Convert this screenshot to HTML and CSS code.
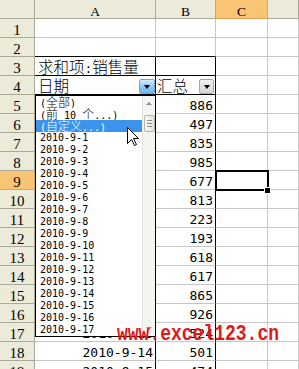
FILE: index.html
```html
<!DOCTYPE html>
<html lang="zh-CN">
<head>
<meta charset="utf-8">
<title>数据透视表 - 日期筛选</title>
<link rel="stylesheet" href="styles.css">
</head>
<body>
<div class="sheet">
  <div class="grid">
    <div class="c hd corner"></div>
    <div class="c hd ch">A</div>
    <div class="c hd ch">B</div>
    <div class="c hd ch hd-on">C</div>
    <div class="c hd ch"></div>

    <div class="c hd rh">1</div><div class="c"></div><div class="c"></div><div class="c"></div><div class="c"></div>
    <div class="c hd rh">2</div><div class="c bb"></div><div class="c bb"></div><div class="c"></div><div class="c"></div>
    <div class="c hd rh">3</div><div class="c cjk bb br">求和项<span class="colon">:</span>销售量</div><div class="c bb br"></div><div class="c"></div><div class="c"></div>
    <div class="c hd rh">4</div>
    <div class="c cjk bb br field"><span>日期</span><span class="dbtn dbtn-on"><i class="tri"></i></span></div>
    <div class="c cjk bb br field fieldb"><span>汇总</span><span class="dbtn"><i class="tri"></i></span></div>
    <div class="c"></div><div class="c"></div>

    <div class="c hd rh">5</div><div class="c num br">2010-9-1</div><div class="c num br">886</div><div class="c"></div><div class="c"></div>
    <div class="c hd rh">6</div><div class="c num br">2010-9-2</div><div class="c num br">497</div><div class="c"></div><div class="c"></div>
    <div class="c hd rh">7</div><div class="c num br">2010-9-3</div><div class="c num br">835</div><div class="c"></div><div class="c"></div>
    <div class="c hd rh">8</div><div class="c num br">2010-9-4</div><div class="c num br">985</div><div class="c"></div><div class="c"></div>
    <div class="c hd rh hd-on">9</div><div class="c num br">2010-9-5</div><div class="c num br">677</div><div class="c active"></div><div class="c"></div>
    <div class="c hd rh">10</div><div class="c num br">2010-9-6</div><div class="c num br">813</div><div class="c"></div><div class="c"></div>
    <div class="c hd rh">11</div><div class="c num br">2010-9-7</div><div class="c num br">223</div><div class="c"></div><div class="c"></div>
    <div class="c hd rh">12</div><div class="c num br">2010-9-8</div><div class="c num br">193</div><div class="c"></div><div class="c"></div>
    <div class="c hd rh">13</div><div class="c num br">2010-9-9</div><div class="c num br">618</div><div class="c"></div><div class="c"></div>
    <div class="c hd rh">14</div><div class="c num br">2010-9-10</div><div class="c num br">617</div><div class="c"></div><div class="c"></div>
    <div class="c hd rh">15</div><div class="c num br">2010-9-11</div><div class="c num br">865</div><div class="c"></div><div class="c"></div>
    <div class="c hd rh">16</div><div class="c num br">2010-9-12</div><div class="c num br">926</div><div class="c"></div><div class="c"></div>
    <div class="c hd rh">17</div><div class="c num br">2010-9-13</div><div class="c num br">524</div><div class="c"></div><div class="c"></div>
    <div class="c hd rh">18</div><div class="c num br">2010-9-14</div><div class="c num br">501</div><div class="c"></div><div class="c"></div>
    <div class="c hd rh">19</div><div class="c num br">2010-9-15</div><div class="c num br">474</div><div class="c"></div><div class="c"></div>
  </div>

  <div class="dd">
    <div class="items">
      <div class="item">(<span class="zh">全部</span>)</div>
      <div class="item">(<span class="zh">前</span> 10 <span class="zh">个</span>...)</div>
      <div class="item sel">(<span class="zh">自定义</span>...)</div>
      <div class="item">2010-9-1</div>
      <div class="item">2010-9-2</div>
      <div class="item">2010-9-3</div>
      <div class="item">2010-9-4</div>
      <div class="item">2010-9-5</div>
      <div class="item">2010-9-6</div>
      <div class="item">2010-9-7</div>
      <div class="item">2010-9-8</div>
      <div class="item">2010-9-9</div>
      <div class="item">2010-9-10</div>
      <div class="item">2010-9-11</div>
      <div class="item">2010-9-12</div>
      <div class="item">2010-9-13</div>
      <div class="item">2010-9-14</div>
      <div class="item">2010-9-15</div>
      <div class="item">2010-9-16</div>
      <div class="item">2010-9-17</div>
    </div>
    <div class="sb">
      <div class="sb-btn"><i class="up"></i></div>
      <div class="thumb"><i></i><i></i><i></i></div>
      <div class="sb-fill"></div>
      <div class="sb-btn"><i class="down"></i></div>
    </div>
  </div>

  <svg class="cursor" width="13" height="20" viewBox="0 0 13 20">
    <path d="M0.5 0.5 V16.5 L4.5 12.5 L7.5 18.5 L9.5 17.5 L6.5 11.5 H11.5 Z" fill="#fff" stroke="#000" stroke-width="1" stroke-linejoin="miter"/>
  </svg>

  <div class="watermark">www.excel123.cn</div>
</div>
</body>
</html>
```
FILE: styles.css
```css
body {
  margin: 0;
  background: #fff;
  overflow: hidden;
}

.sheet {
  position: relative;
  width: 299px;
  height: 369px;
  overflow: hidden;
}

.grid {
  display: grid;
  grid-template-columns: 35px 121px 60px 52px 1fr;
  grid-auto-rows: 19px;
}

.c {
  box-sizing: border-box;
  border-right: 1px solid #c6c6c6;
  border-bottom: 1px solid #c6c6c6;
  overflow: hidden;
  white-space: nowrap;
  color: #000;
  font-family: "DejaVu Sans Mono", monospace;
  font-size: 13px;
  line-height: 14px;
  padding-top: 4px;
}

.hd {
  background: #ecead9;
  border-right-color: #aca899;
  border-bottom-color: #aca899;
  font-family: "Liberation Serif", serif;
  text-align: center;
}

.ch {
  font-size: 13.5px;
  line-height: 16px;
  padding-top: 4px;
}

.rh {
  font-size: 15px;
  line-height: 18px;
  padding-top: 2px;
}

.hd-on {
  background: #f9c574;
  border-right-color: #e0a54c;
  border-bottom-color: #e0a54c;
}

.bb { border-bottom-color: #000; }
.br { border-right-color: #000; }

.num {
  text-align: right;
  padding-right: 2px;
}

.cjk {
  font-family: "Noto Sans CJK SC", sans-serif;
  font-weight: 300;
  font-size: 15.5px;
  line-height: 18px;
  padding-top: 0;
  padding-left: 3px;
}

.colon {
  font-family: "DejaVu Sans Mono", monospace;
  font-size: 13px;
}

.field {
  display: flex;
  justify-content: space-between;
  align-items: flex-start;
}

.fieldb {
  padding-left: 1px;
}

.dbtn {
  box-sizing: border-box;
  width: 15px;
  height: 15px;
  margin-top: 3px;
  margin-right: 1px;
  border: 1px solid #a7a69e;
  border-radius: 2px;
  background: linear-gradient(#f3f3f0, #d6d5cf);
  display: flex;
  justify-content: center;
  padding-top: 5px;
}

.dbtn-on {
  width: 16px;
  margin-right: 0;
  border-color: #6fa6d8;
  background: linear-gradient(#d6ebfd, #8ec6f3 55%, #6fb3ec);
}

.tri {
  display: block;
  width: 0;
  height: 0;
  border-left: 3.5px solid transparent;
  border-right: 3.5px solid transparent;
  border-top: 4px solid #000;
}

.active {
  position: relative;
  overflow: visible;
  z-index: 2;
}

.active::before {
  content: "";
  position: absolute;
  left: -1px;
  top: -1px;
  width: 54px;
  height: 21px;
  box-sizing: border-box;
  border: 2px solid #000;
}

.active::after {
  content: "";
  position: absolute;
  left: 48px;
  top: 16px;
  width: 5px;
  height: 5px;
  background: #000;
  border: 1px solid #fff;
}

/* dropdown list of the pivot field */
.dd {
  position: absolute;
  left: 35px;
  top: 95px;
  width: 121px;
  height: 242px;
  box-sizing: border-box;
  border: 1px solid #000;
  background: #fff;
  display: flex;
  z-index: 3;
}

.items {
  flex: 1;
}

.item {
  height: 12px;
  overflow: hidden;
  white-space: nowrap;
  padding-left: 4px;
  font-family: "DejaVu Sans Mono", monospace;
  font-size: 10px;
  line-height: 12px;
  color: #000;
}

.zh {
  font-family: "Noto Sans CJK SC", sans-serif;
  font-weight: 300;
  font-size: 12px;
  line-height: 12px;
}

.sel {
  background: #3b93ec;
  color: #fff;
}

.sb {
  width: 13px;
  box-sizing: border-box;
  background: #f4f4f1;
  border-left: 1px solid #e6e6e0;
  display: flex;
  flex-direction: column;
  align-items: center;
}

.sb-btn {
  height: 15px;
  width: 100%;
  display: flex;
  justify-content: center;
  align-items: center;
}

.up, .down {
  display: block;
  width: 0;
  height: 0;
  border-left: 3px solid transparent;
  border-right: 3px solid transparent;
}

.up { border-bottom: 3px solid #8a8a8a; }
.down { border-top: 3px solid #8a8a8a; }

.thumb {
  box-sizing: border-box;
  width: 11px;
  height: 17px;
  margin-top: 4px;
  border: 1px solid #b4b4aa;
  border-radius: 2px;
  background: linear-gradient(to right, #fbfbf8, #e2e2dc);
  display: flex;
  flex-direction: column;
  align-items: center;
  justify-content: center;
  gap: 2px;
}

.thumb i {
  display: block;
  width: 5px;
  height: 1px;
  background: #8d8d88;
}

.sb-fill {
  flex: 1;
}

.cursor {
  position: absolute;
  left: 127px;
  top: 127px;
  z-index: 4;
}

.watermark {
  position: absolute;
  left: 117px;
  top: 325px;
  z-index: 5;
  font-family: "Liberation Mono", monospace;
  font-weight: bold;
  font-size: 18px;
  line-height: 20px;
  color: #e01818;
  white-space: nowrap;
  transform: scaleY(1.25);
  transform-origin: 0 15px;
}
```
